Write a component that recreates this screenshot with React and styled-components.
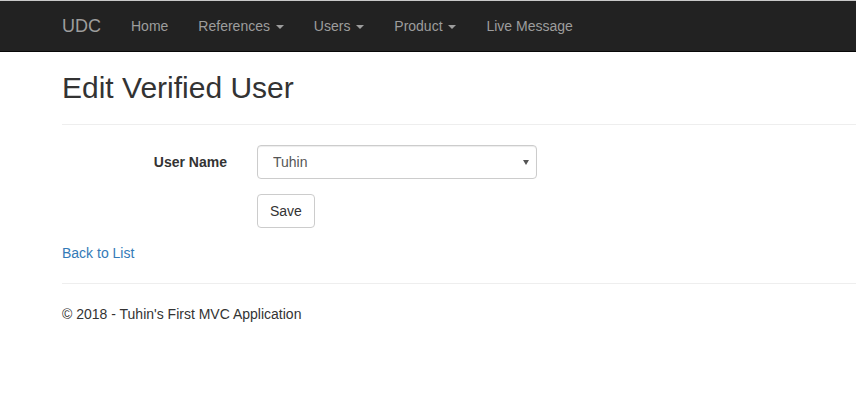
import React from "react";
import styled, { createGlobalStyle } from "styled-components";

const Global = createGlobalStyle`
  html, body { margin: 0; padding: 0; background: #fff; }
  body {
    font-family: "Liberation Sans", Arial, Helvetica, sans-serif;
    font-size: 14px;
    line-height: 1.42857143;
    color: #333;
    overflow: hidden;
  }
  * { box-sizing: border-box; }
`;

const Page = styled.div`
  width: 856px;
  overflow: hidden;
  border-top: 1px solid #c9c9c9;
`;

const Navbar = styled.nav`
  height: 51px;
  background: #222;
  border-bottom: 1px solid #080808;
  display: flex;
  align-items: center;
  padding-left: 47px;
`;

const Brand = styled.a`
  padding: 15px;
  font-size: 18px;
  line-height: 20px;
  color: #9d9d9d;
  text-decoration: none;
`;

const NavList = styled.ul`
  display: flex;
  list-style: none;
  margin: 0;
  padding: 0;
`;

const NavLink = styled.a`
  display: block;
  padding: 15px;
  line-height: 20px;
  color: #9d9d9d;
  text-decoration: none;
`;

const Caret = styled.span`
  display: inline-block;
  width: 0;
  height: 0;
  margin-left: 2px;
  vertical-align: middle;
  border-top: 4px solid #9d9d9d;
  border-left: 4px solid transparent;
  border-right: 4px solid transparent;
`;

const Container = styled.div`
  padding-left: 62px;
  width: 1002px;
`;

const Title = styled.h2`
  font-size: 30px;
  font-weight: 500;
  line-height: 1.1;
  margin: 19px 0 10px;
  color: #333;
`;

const Rule = styled.hr`
  margin: 20px 0;
  border: 0;
  border-top: 1px solid #eee;
`;

const FormGroup = styled.div`
  display: grid;
  grid-template-columns: 165px 280px;
  column-gap: 30px;
  margin-bottom: 15px;
`;

const Label = styled.label`
  font-weight: bold;
  text-align: right;
  padding-top: 7px;
  line-height: 20px;
`;

const SelectWrap = styled.div`
  position: relative;
  width: 280px;
`;

const Select = styled.select`
  display: block;
  width: 280px;
  height: 34px;
  padding: 6px 12px 6px 15px;
  font-family: inherit;
  font-size: 14px;
  color: #555;
  background: #fff;
  border: 1px solid #ccc;
  border-radius: 4px;
  box-shadow: inset 0 1px 1px rgba(0, 0, 0, 0.075);
  appearance: none;
  -webkit-appearance: none;
`;

const Arrow = styled.span`
  position: absolute;
  right: 8px;
  top: 15px;
  width: 0;
  height: 0;
  border-top: 5px solid #555;
  border-left: 3px solid transparent;
  border-right: 3px solid transparent;
  pointer-events: none;
`;

const Button = styled.button`
  display: inline-block;
  padding: 6px 12px;
  font-family: inherit;
  font-size: 14px;
  line-height: 20px;
  color: #333;
  background: #fff;
  border: 1px solid #ccc;
  border-radius: 4px;
`;

const LinkRow = styled.div`
  line-height: 20px;
`;

const Link = styled.a`
  color: #337ab7;
  text-decoration: none;
`;

const Footer = styled.footer`
  p { margin: 0 0 10px; }
`;

export default function App() {
  return (
    <>
      <Global />
      <Page>
        <Navbar>
          <Brand href="#">UDC</Brand>
          <NavList>
            <li><NavLink href="#">Home</NavLink></li>
            <li><NavLink href="#">References <Caret /></NavLink></li>
            <li><NavLink href="#">Users <Caret /></NavLink></li>
            <li><NavLink href="#">Product <Caret /></NavLink></li>
            <li><NavLink href="#">Live Message</NavLink></li>
          </NavList>
        </Navbar>
        <Container>
          <Title>Edit Verified User</Title>
          <Rule />
          <FormGroup>
            <Label>User Name</Label>
            <SelectWrap>
              <Select defaultValue="Tuhin">
                <option>Tuhin</option>
              </Select>
              <Arrow />
            </SelectWrap>
          </FormGroup>
          <FormGroup>
            <div />
            <div>
              <Button>Save</Button>
            </div>
          </FormGroup>
          <LinkRow>
            <Link href="#">Back to List</Link>
          </LinkRow>
          <Rule />
          <Footer>
            <p>© 2018 - Tuhin's First MVC Application</p>
          </Footer>
        </Container>
      </Page>
    </>
  );
}
